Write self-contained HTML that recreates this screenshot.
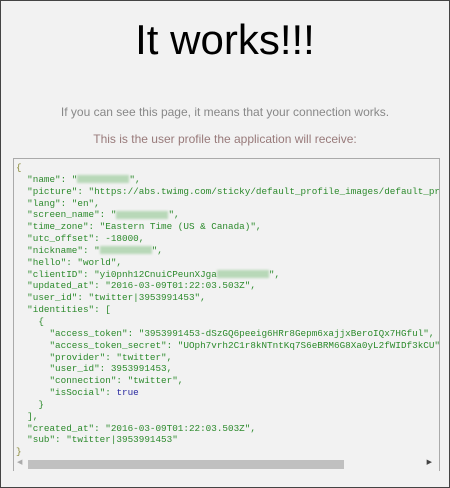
<!DOCTYPE html>
<html><head><style>
html,body{margin:0;padding:0;}
body{width:450px;height:488px;background:#f2f2f2;position:relative;overflow:hidden;font-family:"Liberation Sans",sans-serif;}
.frame{position:absolute;left:0;top:0;width:448px;height:486px;border:1px solid #444;}
h1{position:absolute;left:0;width:450px;top:16px;margin:0;text-align:center;font-weight:normal;font-size:42px;line-height:48px;color:#000;}
.p{position:absolute;left:0;width:450px;text-align:center;font-size:12px;}
.box{position:absolute;left:13px;top:158px;width:425px;height:312px;border:1px solid #aaa;border-bottom:none;overflow:hidden;}
pre{margin:0;padding:3px 0 0 2px;font-family:"Liberation Mono",monospace;font-size:9.3px;line-height:11.85px;color:#2c8a2c;white-space:pre;}
.b{color:#8a8a3a}.t{color:#2a2aa0}
.blur{display:inline-block;background:#b8d8b8;height:8px;vertical-align:middle;filter:blur(1px);}
.sb{position:absolute;left:13px;top:458px;width:425px;height:12px;}
.thumb{position:absolute;left:15px;top:2px;width:316px;height:9px;background:#c0c0c0;}
</style></head><body>
<div class="frame"></div>
<h1>It works!!!</h1>
<div class="p" style="top:105px;color:#888">If you can see this page, it means that your connection works.</div>
<div class="p" style="top:132px;color:#987a7a">This is the user profile the application will receive:</div>
<div class="box"><pre><span class="b">{</span>
  "name": "<span class="blur" style="width:52px"></span>",
  "picture": "https://abs.twimg.com/sticky/default_profile_images/default_profile",
  "lang": "en",
  "screen_name": "<span class="blur" style="width:52px"></span>",
  "time_zone": "Eastern Time (US &amp; Canada)",
  "utc_offset": -18000,
  "nickname": "<span class="blur" style="width:52px"></span>",
  "hello": "world",
  "clientID": "yi0pnh12CnuiCPeunXJga<span class="blur" style="width:52px"></span>",
  "updated_at": "2016-03-09T01:22:03.503Z",
  "user_id": "twitter|3953991453",
  "identities": [
    {
      "access_token": "3953991453-dSzGQ6peeig6HRr8Gepm6xajjxBeroIQx7HGful",
      "access_token_secret": "UOph7vrh2C1r8kNTntKq7S6eBRM6G8Xa0yL2fWIDf3kCU",
      "provider": "twitter",
      "user_id": 3953991453,
      "connection": "twitter",
      "isSocial": <span class="t">true</span>
    }
  ],
  "created_at": "2016-03-09T01:22:03.503Z",
  "sub": "twitter|3953991453"
<span class="b">}</span></pre></div>
<div class="sb"><span style="position:absolute;left:4px;top:0;font-size:7px;color:#aaa">◀</span><div class="thumb"></div><span style="position:absolute;right:6px;top:0;font-size:7px;color:#444">▶</span></div>
</body></html>
